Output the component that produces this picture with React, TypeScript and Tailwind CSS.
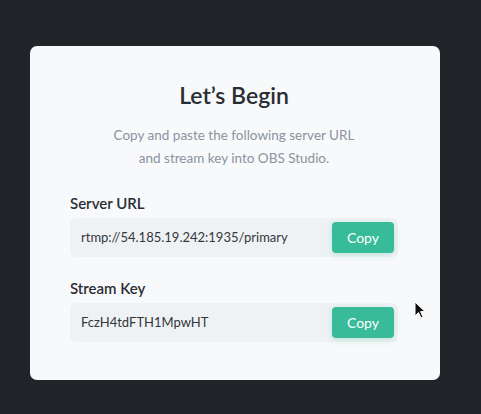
import React from "react";

function Field({ label, value }: { label: string; value: string }) {
  return (
    <div className="flex flex-col">
      <div className="text-[15px] font-semibold leading-[20px] text-[#2a2d33]">{label}</div>
      <div className="mt-[5px] flex h-[39px] items-center justify-between rounded-[6px] bg-[#eff2f4] pl-[11px] pr-[4px]">
        <span className="text-[13px] text-[#33363b]">{value}</span>
        <button className="h-[31px] w-[62px] rounded-[4px] bg-[#37bb98] text-[14px] text-white shadow-[0_2px_6px_rgba(55,187,152,0.25)]">
          Copy
        </button>
      </div>
    </div>
  );
}

export default function App() {
  return (
    <div
      className="relative h-[414px] w-[481px] bg-[#212429] pl-[30px] pt-[46px]"
      style={{ fontFamily: "Lato, 'Noto Sans', sans-serif" }}
    >
      <div className="flex h-[334px] w-[410px] flex-col rounded-[7px] bg-[#f8f9fb] pl-[40px] pr-[42px] pt-[34px]">
        <h1 className="text-center text-[23px] font-semibold leading-[30px] text-[#2a2d33]">Let’s Begin</h1>
        <p className="mt-[14px] text-center text-[13.5px] leading-[23px] text-[#8b939e]">
          Copy and paste the following server URL
          <br />
          and stream key into OBS Studio.
        </p>
        <div className="mt-[23px] flex flex-col gap-[21px]">
          <Field label="Server URL" value="rtmp://54.185.19.242:1935/primary" />
          <Field label="Stream Key" value="FczH4tdFTH1MpwHT" />
        </div>
      </div>
      <svg
        className="absolute left-[414px] top-[301px]"
        width="12"
        height="19"
        viewBox="0 0 12 19"
      >
        <path d="M1 1 L1 15 L4.5 11.5 L7 17 L9 16 L6.6 10.6 L11 10.6 Z" fill="#111" stroke="#fff" strokeWidth="1" />
      </svg>
    </div>
  );
}
